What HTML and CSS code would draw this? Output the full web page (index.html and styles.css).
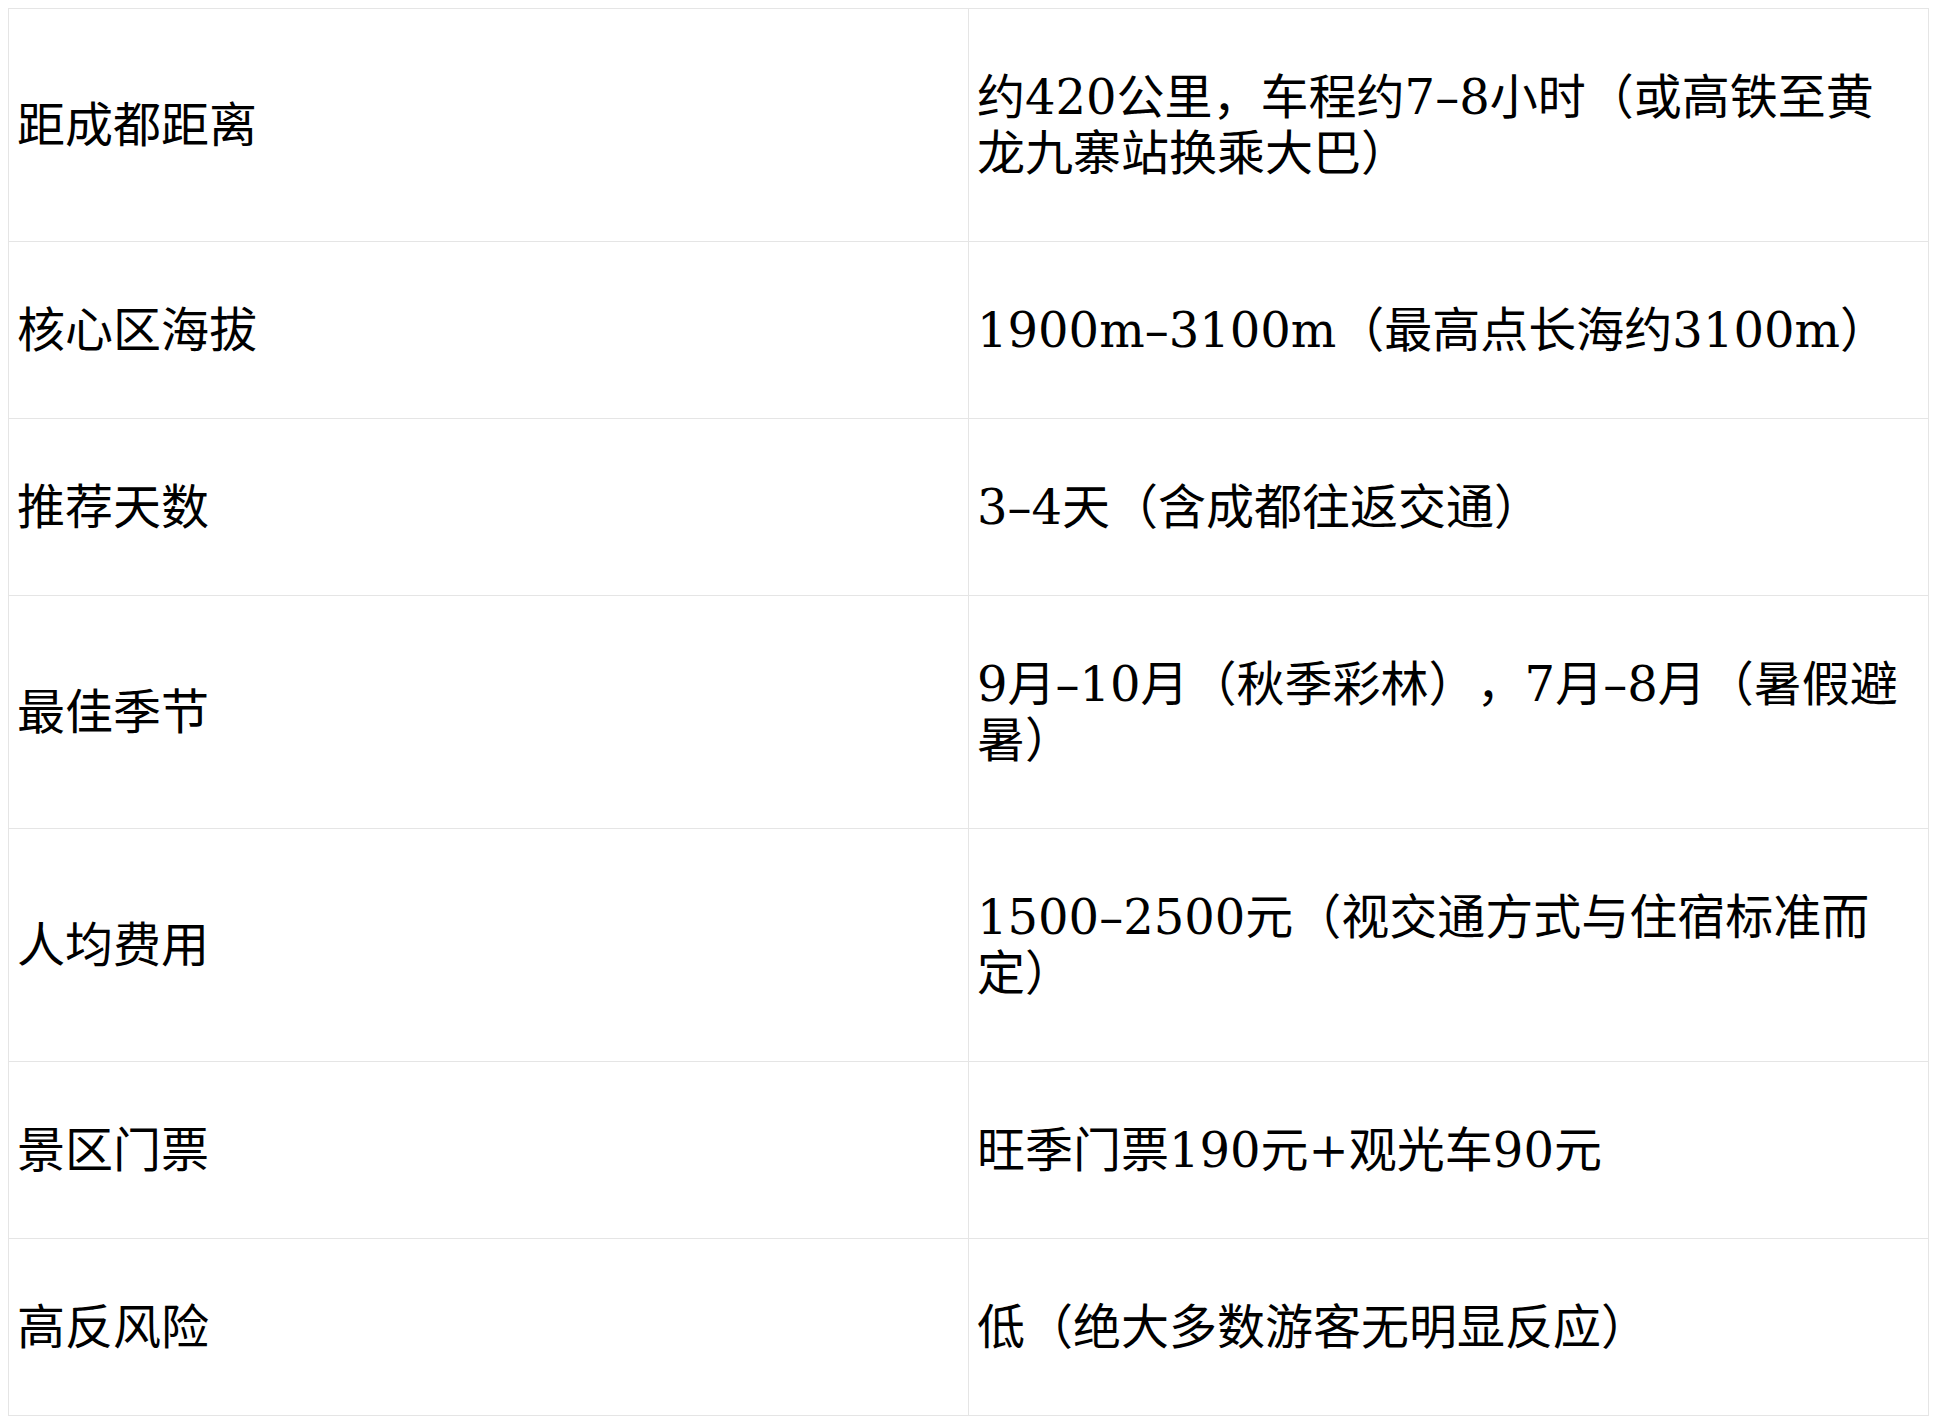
FILE: index.html
```html
<!DOCTYPE html>
<html lang="zh-CN">
<head>
<meta charset="utf-8">
<title>九寨沟</title>
<link rel="stylesheet" href="styles.css">
</head>
<body>
<table class="info-table">
  <colgroup>
    <col class="col-key">
    <col class="col-val">
  </colgroup>
  <tbody>
    <tr>
      <td>距成都距离</td>
      <td>约420公里，车程约7–8小时（或高铁至黄龙九寨站换乘大巴）</td>
    </tr>
    <tr>
      <td>核心区海拔</td>
      <td>1900m–3100m（最高点长海约3100m）</td>
    </tr>
    <tr>
      <td>推荐天数</td>
      <td>3–4天（含成都往返交通）</td>
    </tr>
    <tr>
      <td>最佳季节</td>
      <td>9月–10月（秋季彩林），7月–8月（暑假避暑）</td>
    </tr>
    <tr>
      <td>人均费用</td>
      <td>1500–2500元（视交通方式与住宿标准而定）</td>
    </tr>
    <tr>
      <td>景区门票</td>
      <td>旺季门票190元+观光车90元</td>
    </tr>
    <tr>
      <td>高反风险</td>
      <td>低（绝大多数游客无明显反应）</td>
    </tr>
  </tbody>
</table>
</body>
</html>
```

FILE: styles.css
```css
html, body {
  background: #ffffff;
}

body {
  margin: 8px;
  font-family: "DejaVu Serif", "Noto Sans CJK SC", serif;
  font-size: 48px;
  line-height: 56px;
  color: #000000;
  text-spacing-trim: space-all;
}

.info-table {
  width: 1921px;
  border-collapse: collapse;
  table-layout: fixed;
}

.col-key,
.col-val {
  width: 50%;
}

.info-table td {
  border: 1px solid #e5e5e5;
  padding: 60px 8px;
  vertical-align: middle;
  text-align: left;
}
```
